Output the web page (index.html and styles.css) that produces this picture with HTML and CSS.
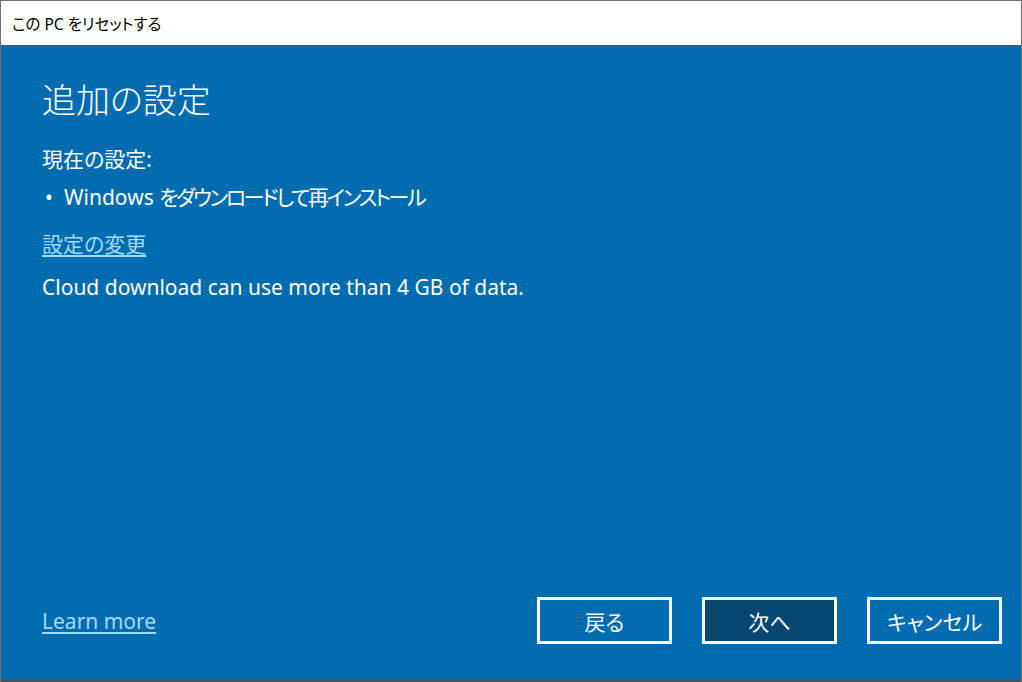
FILE: index.html
```html
<!DOCTYPE html>
<html lang="ja">
<head>
<meta charset="utf-8">
<title>この PC をリセットする</title>
<link rel="stylesheet" href="styles.css">
</head>
<body>
<div class="window">
  <div class="titlebar">この PC をリセットする</div>
  <div class="content">
    <h1 class="heading">追加の設定</h1>
    <p class="label">現在の設定:</p>
    <ul class="settings">
      <li>Windows <span class="ja">をダウンロードして再インストール</span></li>
    </ul>
    <a class="link change" href="#">設定の変更</a>
    <p class="note">Cloud download can use more than 4 GB of data.</p>
    <div class="spacer"></div>
    <div class="footer">
      <a class="link learn" href="#">Learn more</a>
      <div class="buttons">
        <button class="btn">戻る</button>
        <button class="btn primary">次へ</button>
        <button class="btn">キャンセル</button>
      </div>
    </div>
  </div>
  <div class="bottom-edge"></div>
</div>
</body>
</html>
```
FILE: styles.css
```css
html, body {
  margin: 0;
  padding: 0;
  height: 100%;
}
body {
  font-family: "Noto Sans", "Noto Sans CJK JP", sans-serif;
  font-feature-settings: "palt";
  background: #3a3a3a;
  overflow: hidden;
}
.window {
  box-sizing: border-box;
  height: 682px;
  width: 1022px;
  display: flex;
  flex-direction: column;
  border-top: 1px solid #6f6f6f;
  border-left: 1px solid #6f6f6f;
  border-right: 1px solid #6f6f6f;
}
.titlebar {
  height: 44px;
  flex: none;
  background: #ffffff;
  color: #000000;
  font-size: 15.5px;
  display: flex;
  align-items: center;
  padding-left: 11px;
  padding-top: 1px;
  box-sizing: border-box;
}
.content {
  flex: 1;
  background: #006cb0;
  color: #ffffff;
  display: flex;
  flex-direction: column;
  align-items: flex-start;
  padding: 0 19px 0 41px;
}
.heading {
  font-weight: 300;
  font-size: 34px;
  line-height: 40px;
  margin: 35px 0 0 0;
}
.label {
  font-size: 21px;
  line-height: 28px;
  margin: 25px 0 0 0;
}
.settings {
  list-style: none;
  margin: 10px 0 0 0;
  padding: 0;
  font-size: 21px;
  line-height: 28px;
}
.settings li::before {
  content: "•";
  display: inline-block;
  width: 22px;
  padding-left: 3px;
  box-sizing: border-box;
}
.settings .ja {
  letter-spacing: -2.4px;
}
.link {
  color: #a4d9ff;
  text-decoration: underline;
  text-underline-offset: 3px;
}
.change {
  font-size: 21px;
  line-height: 28px;
  margin-top: 19px;
}
.note {
  font-size: 21px;
  line-height: 28px;
  margin: 15px 0 0 0;
}
.spacer {
  flex: 1;
}
.footer {
  align-self: stretch;
  display: flex;
  align-items: center;
  justify-content: space-between;
  margin-bottom: 36px;
}
.learn {
  font-size: 21px;
  line-height: 28px;
}
.buttons {
  display: flex;
  gap: 30px;
}
.btn {
  width: 135px;
  height: 47px;
  box-sizing: border-box;
  border: 3px solid #ffffff;
  background: transparent;
  color: #ffffff;
  font-family: "Noto Sans", "Noto Sans CJK JP", sans-serif;
  font-feature-settings: "palt";
  font-size: 21px;
  padding: 0;
}
.btn.primary {
  background: #07466f;
}
.bottom-edge {
  height: 2px;
  flex: none;
  background: #505050;
}
```
